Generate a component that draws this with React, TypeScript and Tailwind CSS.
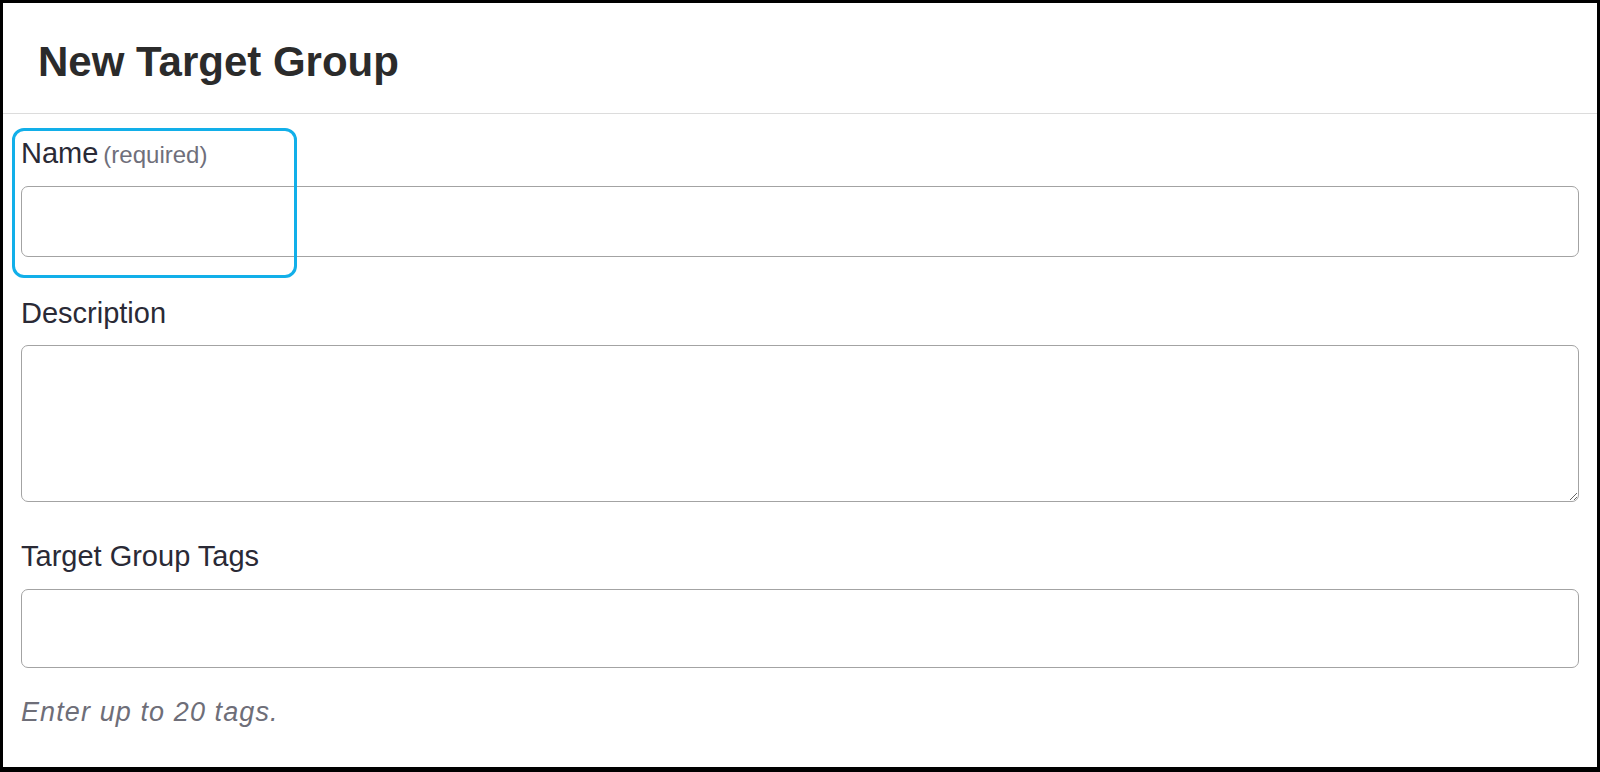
const FONT = "font-['Liberation_Sans',Arial,sans-serif]";

const INPUT =
  "block w-full box-border rounded-[7px] border-[1.5px] border-[#a3a3a3] bg-white px-3 outline-none";

const App = () => {
  return (
    <div
      className={`${FONT} relative box-border h-[772px] w-full overflow-hidden border-x-[3px] border-t-[3px] border-b-[5px] border-black bg-white`}
    >
      {/* Header */}
      <div className="box-border h-[111px] border-b border-[#dcdcdc] pl-[35px] pt-[38px]">
        <h1 className="text-[42px] font-bold leading-[42px] text-[#2b2b2b]">New Target Group</h1>
      </div>

      {/* Form */}
      <div className="px-[18px] pt-[21px]">
        <div className="flex items-baseline gap-[5px] leading-[36px]">
          <span className="text-[29px] text-[#2a2a36]">Name</span>
          <span className="text-[24px] text-[#6f6f7b]">(required)</span>
        </div>
        <input type="text" className={`${INPUT} mt-[13px] h-[71px]`} />

        <div className="mt-[38px] text-[29px] leading-[36px] text-[#2a2a36]">Description</div>
        <textarea className={`${INPUT} mt-[14px] h-[157px] resize-y py-2`} />

        <div className="mt-[36px] text-[29px] leading-[36px] text-[#2a2a36]">Target Group Tags</div>
        <input type="text" className={`${INPUT} mt-[15px] h-[79px]`} />

        <p className="mt-[28px] text-[27px] italic leading-[32px] tracking-[1.1px] text-[#6e6e78]">
          Enter up to 20 tags.
        </p>
      </div>

      {/* Highlight annotation over the Name field */}
      <div className="pointer-events-none absolute left-[9px] top-[125px] h-[150px] w-[285px] rounded-[12px] border-[3px] border-[#12afe9]" />
    </div>
  );
};

export default App;
